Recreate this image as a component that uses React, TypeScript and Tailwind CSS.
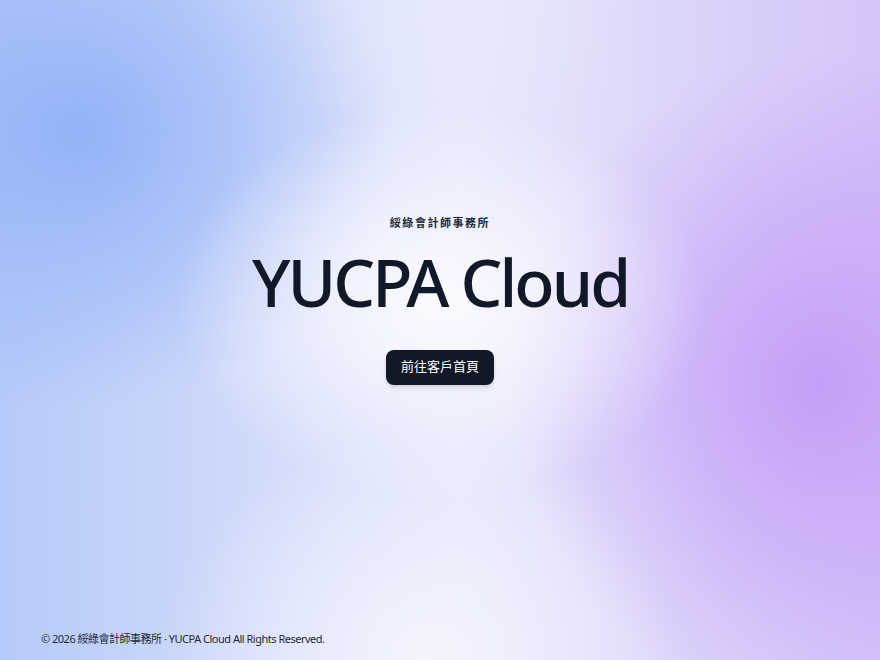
import React from 'react';

const font = { fontFamily: '"Noto Sans", "Noto Sans CJK TC", sans-serif' };

const App: React.FC = () => {
  return (
    <div
      style={font}
      className="flex h-[660px] w-full flex-col bg-[radial-gradient(ellipse_30%_30%_at_50%_46%,rgba(250,250,255,1)_0%,rgba(250,250,255,0.6)_45%,transparent_100%),radial-gradient(ellipse_30%_35%_at_48%_100%,rgba(246,246,254,0.9)_0%,transparent_100%),radial-gradient(ellipse_20%_30%_at_52%_0%,rgba(232,235,252,0.6)_0%,transparent_100%),radial-gradient(ellipse_36%_42%_at_9%_20%,#93b3f8_0%,rgba(147,179,248,0)_100%),radial-gradient(ellipse_35%_50%_at_93%_58%,#c49ff8_0%,rgba(196,159,248,0)_100%),linear-gradient(90deg,#b6caf9_0%,#e6e8fc_52%,#d6c4f9_100%)]"
    >
      <main className="flex flex-1 flex-col items-center pt-[215px]">
        <p className="text-[11px] font-semibold tracking-[0.14em] text-gray-800">
          綏綠會計師事務所
        </p>
        <h1 className="mt-[16px] text-[66px] font-medium leading-none tracking-[-0.045em] text-[#111827]">
          YUCPA Cloud
        </h1>
        <button className="mt-[36px] h-[35px] rounded-lg bg-[#111827] px-[15px] text-[13px] text-white shadow-md">
          前往客戶首頁
        </button>
      </main>
      <footer className="px-[41px] pb-[13px] text-[11px] tracking-[-0.045em] text-gray-800">
        © 2026 綏綠會計師事務所 · YUCPA Cloud All Rights Reserved.
      </footer>
    </div>
  );
};

export default App;
